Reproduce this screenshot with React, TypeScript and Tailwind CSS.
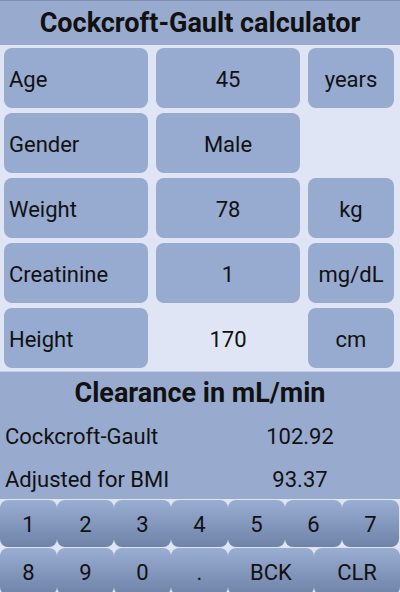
import React from 'react';

const rows = [
  { label: 'Age', value: '45', unit: 'years', valueBg: true },
  { label: 'Gender', value: 'Male', unit: null, valueBg: true },
  { label: 'Weight', value: '78', unit: 'kg', valueBg: true },
  { label: 'Creatinine', value: '1', unit: 'mg/dL', valueBg: true },
  { label: 'Height', value: '170', unit: 'cm', valueBg: false },
];

const results = [
  { label: 'Cockcroft-Gault', value: '102.92' },
  { label: 'Adjusted for BMI', value: '93.37' },
];

const keysTop = ['1', '2', '3', '4', '5', '6', '7'];
const keysBottom = ['8', '9', '0', '.'];

function Key({ label, wide }: { label: string; wide?: boolean }) {
  return (
    <button
      className={
        'h-[47px] rounded-lg bg-linear-to-b from-[#9aaed3] to-[#6f82a8] flex items-center justify-center pt-[2px] text-[22px] text-[#111] ' +
        (wide ? 'w-[86px]' : 'w-[57px]')
      }
    >
      {label}
    </button>
  );
}

export default function App() {
  return (
    <div className="w-[400px] h-[592px] overflow-hidden bg-[#dfe5f4] flex flex-col text-[#111]" style={{ fontFamily: 'Roboto, "Liberation Sans", sans-serif' }}>
      <div className="h-[45px] shrink-0 border-t border-[#7d90b4] bg-[#98abcf] flex items-center justify-center">
        <h1 className="text-[27px] font-bold leading-none">Cockcroft-Gault calculator</h1>
      </div>

      <div className="grid grid-cols-[144px_144px_86px] gap-x-[8px] gap-y-[5px] pl-[4px] pt-[3px]">
        {rows.map((r) => (
          <React.Fragment key={r.label}>
            <div className="h-[60px] rounded-lg bg-[#97aacf] flex items-center pl-[5px] pt-[3px] text-[22px]">{r.label}</div>
            <div className={'h-[60px] rounded-lg flex items-center justify-center pt-[3px] text-[22px] ' + (r.valueBg ? 'bg-[#97aacf]' : '')}>
              {r.value}
            </div>
            {r.unit ? (
              <div className="h-[60px] rounded-lg bg-[#97aacf] flex items-center justify-center pt-[3px] text-[22px]">{r.unit}</div>
            ) : (
              <div className="h-[60px]" />
            )}
          </React.Fragment>
        ))}
      </div>

      <div className="mt-[3px] border-t border-[#c3cee6] bg-[#98abcf] h-[128px] shrink-0 flex flex-col">
        <div className="h-[43px] flex items-center justify-center">
          <h2 className="text-[27px] font-bold leading-none">Clearance in mL/min</h2>
        </div>
        {results.map((r) => (
          <div key={r.label} className="h-[43px] grid grid-cols-[200px_200px] items-center pt-[3px] text-[22px]">
            <span className="pl-[5px]">{r.label}</span>
            <span className="text-center">{r.value}</span>
          </div>
        ))}
      </div>

      <div className="mt-px flex flex-col gap-px">
        <div className="flex">
          {keysTop.map((k) => (
            <Key key={k} label={k} />
          ))}
        </div>
        <div className="flex">
          {keysBottom.map((k) => (
            <Key key={k} label={k} />
          ))}
          <Key label="BCK" wide />
          <Key label="CLR" wide />
        </div>
      </div>
    </div>
  );
}
